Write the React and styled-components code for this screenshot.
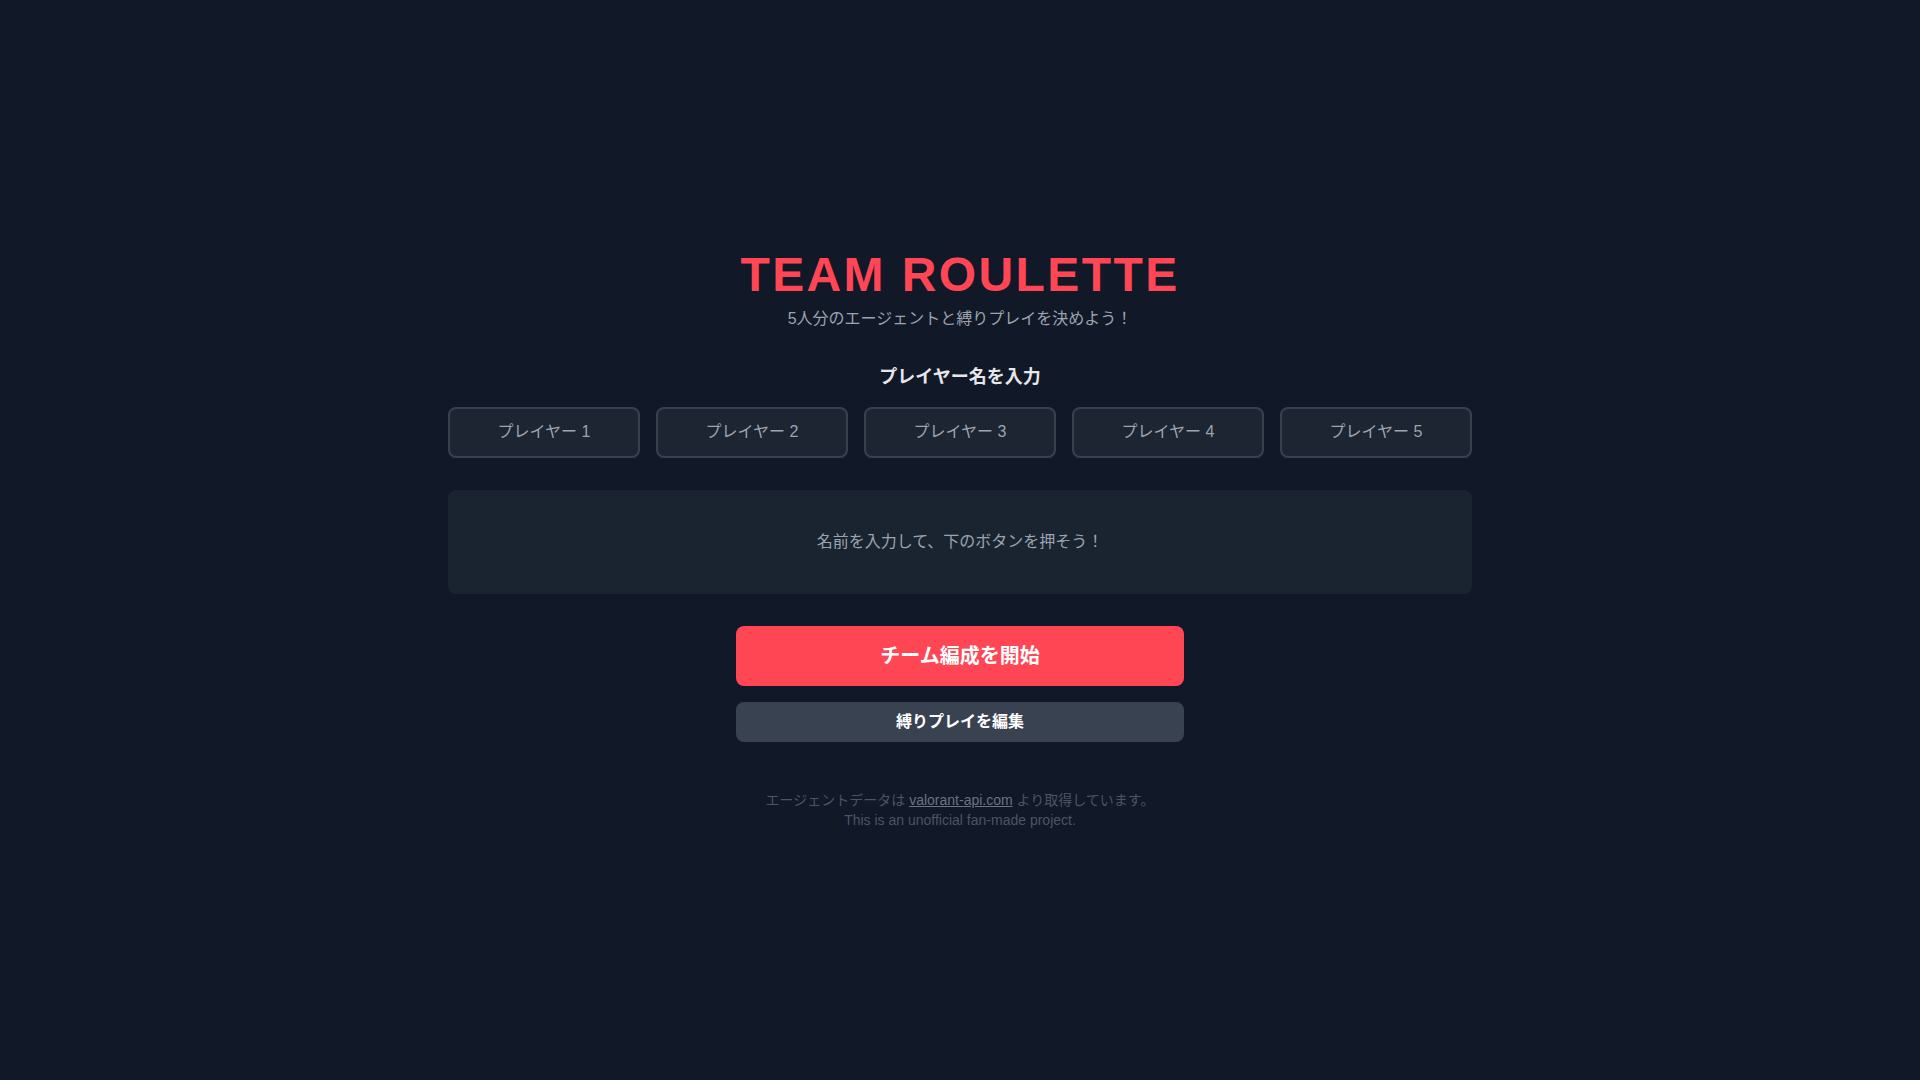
import React from "react";
import styled, { createGlobalStyle } from "styled-components";

const Global = createGlobalStyle`
  * { box-sizing: border-box; }
  html, body { margin: 0; padding: 0; background: #111827; }
  body {
    font-family: "Liberation Sans", Arial, "Noto Sans CJK JP", sans-serif;
    color: #e5e7eb;
  }
`;

const Page = styled.div`
  min-height: 100vh;
  display: flex;
  flex-direction: column;
  align-items: center;
  justify-content: center;
  background: #111827;
`;

const Main = styled.main`
  width: 1024px;
  display: flex;
  flex-direction: column;
  align-items: center;
`;

const Header = styled.header`
  text-align: center;
  margin-bottom: 32px;
`;

const Title = styled.h1`
  margin: 0;
  font-size: 48px;
  line-height: 1;
  font-weight: 700;
  letter-spacing: 0.05em;
  color: #ff4655;
`;

const Subtitle = styled.p`
  margin: 8px 0 0;
  font-size: 16px;
  line-height: 24px;
  color: #9ca3af;
`;

const SectionTitle = styled.h2`
  margin: 0 0 16px;
  font-size: 18px;
  line-height: 28px;
  font-weight: 700;
  color: #e5e7eb;
  text-align: center;
`;

const InputGrid = styled.div`
  width: 100%;
  display: grid;
  grid-template-columns: repeat(5, 1fr);
  gap: 16px;
  margin-bottom: 32px;
`;

const NameInput = styled.input`
  width: 100%;
  height: 51px;
  padding: 12px;
  background: #1c2531;
  border: 2px solid #374151;
  border-radius: 8px;
  color: #e5e7eb;
  font-family: inherit;
  font-size: 16px;
  text-align: center;
  outline: none;
  &::placeholder { color: #9ca3af; }
`;

const ResultCard = styled.div`
  width: 100%;
  height: 104px;
  display: flex;
  align-items: center;
  justify-content: center;
  background: #1a2430;
  border-radius: 8px;
  color: #9ca3af;
  font-size: 16px;
  line-height: 24px;
`;

const Actions = styled.div`
  width: 448px;
  margin-top: 32px;
  display: flex;
  flex-direction: column;
  gap: 16px;
`;

const Button = styled.button`
  width: 100%;
  border: none;
  border-radius: 8px;
  font-family: inherit;
  font-weight: 700;
  color: #ffffff;
  cursor: pointer;
  background: ${(p) => (p.$variant === "primary" ? "#ff4655" : "#394250")};
  font-size: ${(p) => (p.$variant === "primary" ? "20px" : "16px")};
  line-height: ${(p) => (p.$variant === "primary" ? "28px" : "24px")};
  padding: ${(p) => (p.$variant === "primary" ? "16px" : "8px")};
`;

const Footer = styled.footer`
  margin-top: 48px;
  text-align: center;
  font-size: 14px;
  line-height: 20px;
  color: #4b5563;
`;

const FooterLine = styled.p`
  margin: 0;
`;

const Link = styled.a`
  color: #6b7280;
  text-decoration: underline;
`;

export default function App() {
  return (
    <>
      <Global />
      <Page>
        <Main>
          <Header>
            <Title>TEAM ROULETTE</Title>
            <Subtitle>5人分のエージェントと縛りプレイを決めよう！</Subtitle>
          </Header>
          <SectionTitle>プレイヤー名を入力</SectionTitle>
          <InputGrid>
            {[1, 2, 3, 4, 5].map((n) => (
              <NameInput key={n} placeholder={`プレイヤー ${n}`} />
            ))}
          </InputGrid>
          <ResultCard>名前を入力して、下のボタンを押そう！</ResultCard>
          <Actions>
            <Button $variant="primary">チーム編成を開始</Button>
            <Button $variant="secondary">縛りプレイを編集</Button>
          </Actions>
          <Footer>
            <FooterLine>
              エージェントデータは <Link href="#">valorant-api.com</Link> より取得しています。
            </FooterLine>
            <FooterLine>This is an unofficial fan-made project.</FooterLine>
          </Footer>
        </Main>
      </Page>
    </>
  );
}
